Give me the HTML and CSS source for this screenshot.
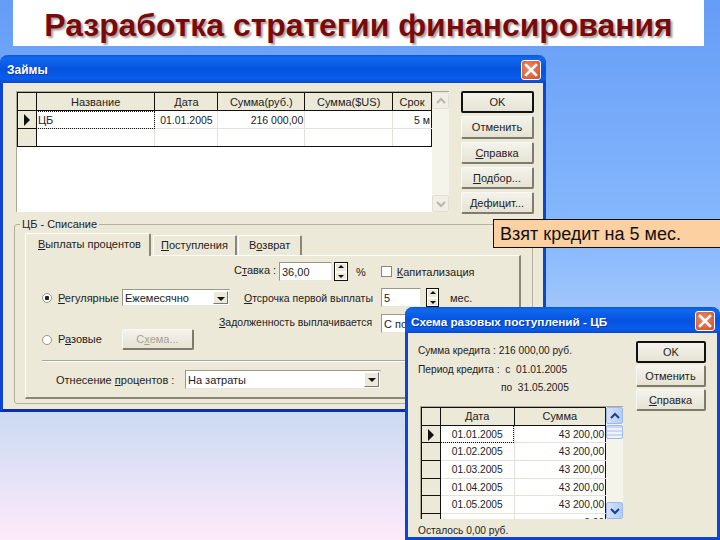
FILE: index.html
```html
<!DOCTYPE html>
<html lang="en">
  <head>
    <meta charset="UTF-8" />
    <title>Разработка стратегии финансирования</title>
    <link rel="stylesheet" href="styles.css">
  </head>
  <body>
    <h1 class="slideTitle">Разработка стратегии финансирования</h1>

    <div class="window loansWin">
      <div class="titleBar">
        <span>Займы</span>
        <span class="closeBtn"><svg viewBox="0 0 20 20" width="20" height="20"><path d="M5 5L15 15M15 5L5 15" stroke="#fff" stroke-width="2.6" stroke-linecap="square"/></svg></span>
      </div>
      <div class="topRow">
        <div class="gridFrame loansGrid">
          <table class="grid">
            <colgroup><col class="c18"><col class="c119"><col class="c63"><col class="c87"><col class="c88"><col class="c38"></colgroup>
            <tr><th></th><th>Название</th><th>Дата</th><th>Сумма(руб.)</th><th>Сумма($US)</th><th>Срок</th></tr>
            <tr><th><span class="rowArrow"></span></th><td class="current">ЦБ</td><td class="mid">01.01.2005</td><td class="num">216 000,00</td><td></td><td class="num">5 м</td></tr>
            <tr><th></th><td></td><td></td><td></td><td></td><td></td></tr>
          </table>
          <div class="scrollbar off">
            <span class="scrollBtn"><svg viewBox="0 0 10 8" width="10" height="8"><path d="M1 6L5 2L9 6" fill="none" stroke="#b9b7ab" stroke-width="2"/></svg></span>
            <span class="scrollBtn"><svg viewBox="0 0 10 8" width="10" height="8"><path d="M1 2L5 6L9 2" fill="none" stroke="#b9b7ab" stroke-width="2"/></svg></span>
          </div>
        </div>
        <div class="btnCol">
          <button class="btn default okBtn">OK</button>
          <button class="btn tall">Отменить</button>
          <button class="btn"><u>С</u>правка</button>
          <button class="btn"><u>П</u>одбор...</button>
          <button class="btn"><u>Д</u>ефицит...</button>
        </div>
      </div>

      <fieldset class="group">
        <legend>ЦБ - Списание</legend>
        <div class="tabs">
          <div class="tab active"><u>В</u>ыплаты процентов</div>
          <div class="tab t2"><u>П</u>оступления</div>
          <div class="tab t3">В<u>о</u>зврат</div>
        </div>
        <div class="tabPanel">
          <div class="row rateRow">
            <span class="lbl rateLbl">С<u>т</u>авка :</span>
            <span class="field rateField">36,00</span>
            <span class="spin"><i class="up"></i><i class="down"></i></span>
            <span class="percent">%</span>
            <span class="check"></span>
            <span class="lbl capLbl"><u>К</u>апитализация</span>
          </div>
          <div class="row regRow">
            <span class="radio on"></span>
            <span class="lbl regLbl"><u>Р</u>егулярные</span>
            <span class="field combo monthCombo">Ежемесячно<b class="comboBtn"></b></span>
            <span class="lbl delayLbl"><u>О</u>тсрочка первой выплаты</span>
            <span class="field delayField">5</span>
            <span class="spin delaySpin"><i class="up"></i><i class="down"></i></span>
            <span class="lbl monLbl">мес.</span>
          </div>
          <div class="row payRow">
            <div class="onceBlock">
              <span class="radio"></span>
              <span class="lbl onceLbl">Р<u>а</u>зовые</span>
              <button class="btn disabled schemeBtn">С<u>х</u>ема...</button>
            </div>
            <span class="lbl debtLbl"><u>З</u>адолженность выплачивается</span>
            <span class="field debtField">С по</span>
          </div>
          <div class="separator"></div>
          <div class="row costRow">
            <span class="lbl costLbl">Отнесение <u>п</u>роцентов :</span>
            <span class="field combo costCombo">На затраты<b class="comboBtn"></b></span>
          </div>
        </div>
      </fieldset>
    </div>

    <div class="hint">Взят кредит на 5 мес.</div>

    <div class="window schemeWin">
      <div class="titleBar small">
        <span>Схема разовых поступлений - ЦБ</span>
        <span class="closeBtn"><svg viewBox="0 0 20 20" width="20" height="20"><path d="M5 5L15 15M15 5L5 15" stroke="#fff" stroke-width="2.6" stroke-linecap="square"/></svg></span>
      </div>
      <div class="schemeBody">
        <div class="schemeLeft">
          <div class="infoLine first">Сумма кредита : 216 000,00 руб.</div>
          <div class="infoLine">Период кредита :&nbsp; с&nbsp; 01.01.2005</div>
          <div class="infoLine indent">по&nbsp; 31.05.2005</div>
          <div class="gridFrame schemeGrid">
            <table class="grid">
              <colgroup><col class="c18"><col class="c74"><col class="c92"></colgroup>
              <tr><th></th><th>Дата</th><th>Сумма</th></tr>
              <tr><th><span class="rowArrow"></span></th><td class="current mid">01.01.2005</td><td class="num">43 200,00</td></tr>
              <tr><th></th><td class="mid">01.02.2005</td><td class="num">43 200,00</td></tr>
              <tr><th></th><td class="mid">01.03.2005</td><td class="num">43 200,00</td></tr>
              <tr><th></th><td class="mid">01.04.2005</td><td class="num">43 200,00</td></tr>
              <tr><th></th><td class="mid">01.05.2005</td><td class="num">43 200,00</td></tr>
              <tr><th></th><td></td><td class="num">0,00</td></tr>
            </table>
            <div class="scrollbar">
              <span class="scrollBtn blue"><svg viewBox="0 0 10 8" width="10" height="8"><path d="M1 6L5 2L9 6" fill="none" stroke="#1d3f8c" stroke-width="2"/></svg></span>
              <span class="thumb"></span>
              <span class="scrollBtn blue bottom"><svg viewBox="0 0 10 8" width="10" height="8"><path d="M1 2L5 6L9 2" fill="none" stroke="#1d3f8c" stroke-width="2"/></svg></span>
            </div>
          </div>
          <div class="leftover">Осталось 0,00 руб.</div>
        </div>
        <div class="btnCol schemeBtns">
          <button class="btn default">OK</button>
          <button class="btn">Отменить</button>
          <button class="btn"><u>С</u>правка</button>
        </div>
      </div>
    </div>
  </body>
</html>
```

FILE: styles.css
```css
* {
  box-sizing: border-box;
}
body {
  margin: 0;
  width: 720px;
  height: 540px;
  overflow: hidden;
  position: relative;
  font-family: "Liberation Sans", Arial, sans-serif;
  font-size: 11px;
  color: #222;
  background: linear-gradient(#659cf6 0, #8abbfe 250px, #cbdaf2 412px, #fdeafa 540px);
}
.slideTitle {
  margin: 0 16px 0 13px;
  height: 46px;
  background: #fff;
  color: #7a0a0a;
  font-size: 31.9px;
  line-height: 50px;
  text-align: center;
  text-shadow: 2px 2px 2px #a9a2a2;
}

/* windows */
.window {
  position: absolute;
  background: #ece9d8;
  border: 3px solid #0c46cf;
  border-top: none;
  border-radius: 8px 8px 0 0;
}
.loansWin {
  left: 0;
  top: 55px;
  width: 546px;
  height: 357px;
  border-bottom-color: #0a2fa8;
}
.schemeWin {
  left: 405px;
  top: 307px;
  width: 315px;
  height: 233px;
}
.titleBar {
  display: flex;
  justify-content: space-between;
  align-items: center;
  height: 28px;
  margin: 0 -3px;
  padding: 2px 5px 0 7px;
  border-radius: 8px 8px 0 0;
  background: linear-gradient(#0a56d8 0, #1068ee 12%, #0553e0 50%, #0a5cec 85%, #0c48c8 100%);
  color: #fff;
  font-weight: bold;
  font-size: 12px;
  text-shadow: 1px 1px 0 #0a3a9c;
}
.titleBar.small {
  height: 26px;
  padding-left: 6px;
  font-size: 11.75px;
}
.closeBtn {
  width: 20px;
  height: 20px;
  border: 1px solid #fff;
  border-radius: 3px;
  background: radial-gradient(circle at 40% 40%, #ec8a68, #d24a22);
  display: flex;
  align-items: center;
  justify-content: center;
}
.closeBtn svg {
  flex: none;
}

/* top part of loans */
.topRow {
  display: flex;
  margin: 8px 0 0 13px;
}
.gridFrame {
  display: flex;
  border-top: 1px solid #aca899;
  border-left: 1px solid #aca899;
  background: #fff;
  overflow: hidden;
}
.loansGrid {
  width: 433px;
  height: 121px;
}
.grid {
  border-collapse: collapse;
  table-layout: fixed;
  align-self: flex-start;
  font-size: 11px;
}
.c18 { width: 19px; }
.c119 { width: 119px; }
.c63 { width: 63px; }
.c87 { width: 87px; }
.c88 { width: 88px; }
.c38 { width: 39px; }
.c74 { width: 74px; }
.c92 { width: 92px; }
.grid th {
  height: 18px;
  padding: 0;
  background: #ece9d8;
  font-weight: normal;
  border: 1px solid #111;
  text-align: center;
}
.grid td {
  height: 18px;
  padding: 0 1px;
  border: 1px solid #e4e2d6;
  white-space: nowrap;
  overflow: hidden;
}
.grid tr:last-child td {
  border-bottom-color: #111;
}
.grid tr:last-child th {
  border-bottom-color: #111;
}
.grid td:last-child {
  border-right-color: #111;
}
.schemeGrid .grid tr:last-child td {
  border-bottom-color: #e4e2d6;
}
.grid .current {
  outline: 1px dotted #111;
  outline-offset: -1px;
}
.grid .mid {
  text-align: center;
  font-size: 10.5px;
}
.grid .num {
  text-align: right;
  font-size: 10.5px;
}
.rowArrow {
  display: inline-block;
  vertical-align: middle;
  border-left: 6px solid #111;
  border-top: 6px solid transparent;
  border-bottom: 6px solid transparent;
}
.scrollbar {
  width: 17px;
  display: flex;
  flex-direction: column;
  justify-content: space-between;
  background: #f5f4ea;
}
.scrollBtn {
  display: flex;
  align-items: center;
  justify-content: center;
  height: 17px;
  background: #f0efe6;
  border: 1px solid #e2e0d4;
  border-radius: 2px;
}
.scrollBtn.blue {
  background: linear-gradient(90deg, #d4e2fb, #b4ccf5);
  border-color: #9db8ea;
}
.scrollBtn.bottom {
  margin-top: auto;
}
.thumb {
  height: 14px;
  margin-top: 1px;
  background: repeating-linear-gradient(#c8d8f5 0 2px, #eef3fd 2px 4px);
  border: 1px solid #9db8ea;
  border-radius: 2px;
}

/* buttons */
.btnCol {
  display: flex;
  flex-direction: column;
  gap: 3px;
  width: 73px;
  margin-left: 12px;
}
.btn {
  height: 22px;
  padding: 0;
  font: inherit;
  color: #222;
  background: linear-gradient(#f4f3ec, #e6e3d3);
  border: 1px solid #f8f7f2;
  border-right: 2px solid #7d7b6c;
  border-bottom: 2px solid #7d7b6c;
  border-radius: 2px;
}
.btn.tall {
  height: 23px;
}
.btn.default {
  border: 2px solid #111;
}
.btn.disabled {
  color: #a5a294;
}

/* group with tabs */
.group {
  margin: 3px 10px 0 11px;
  padding: 2px 11px 4px 10px;
  min-width: 0;
  border: 1px solid #b3b09e;
  border-radius: 3px;
}
.group legend {
  padding: 0 2px;
  margin-left: -5px;
  line-height: 14px;
}
.tabs {
  display: flex;
  align-items: flex-end;
  height: 22px;
}
.tab {
  height: 20px;
  padding: 3px 0 0 10px;
  width: 64px;
  background: #ece9d8;
  border-top: 1px solid #fff;
  border-left: 1px solid #fff;
  border-right: 2px solid #8a8774;
  border-radius: 2px 2px 0 0;
  white-space: nowrap;
}
.tab.active {
  width: 126px;
  height: 23px;
  margin-bottom: -1px;
  position: relative;
  padding: 4px 0 0 12px;
}
.tab.t2 {
  width: 84px;
  margin-left: 2px;
  padding-left: 7px;
}
.tab.t3 {
  margin-left: 1px;
}
.tabPanel {
  height: 144px;
  padding: 6px 0 0 16px;
  border: 1px solid #fff;
  border-right: 2px solid #8a8774;
  border-bottom: 2px solid #8a8774;
}
.row {
  display: flex;
  align-items: center;
}
.lbl {
  white-space: nowrap;
  flex: none;
}
.field {
  flex: none;
  display: flex;
  align-items: center;
  padding-left: 2px;
  background: #fff;
  border: 1px solid #9a9786;
  border-right-color: #e8e6da;
  border-bottom-color: #e8e6da;
  white-space: nowrap;
  overflow: hidden;
}
.combo {
  justify-content: space-between;
  padding-right: 1px;
}
.comboBtn {
  flex: none;
  position: relative;
  width: 15px;
  height: calc(100% - 2px);
  background: #ece9d8;
  border: 1px solid #fff;
  border-right-color: #777;
  border-bottom-color: #777;
}
.comboBtn::after {
  content: "";
  position: absolute;
  left: 3px;
  top: 5px;
  border-top: 4px solid #111;
  border-left: 4px solid transparent;
  border-right: 4px solid transparent;
}
.spin {
  flex: none;
  display: flex;
  flex-direction: column;
  width: 14px;
  height: 19px;
  margin-left: 2px;
  border: 1px solid #111;
}
.spin i {
  flex: 1;
  position: relative;
  background: #ece9d8;
  border: 1px solid #fff;
}
.spin i::after {
  content: "";
  position: absolute;
  left: 2px;
  border-left: 3px solid transparent;
  border-right: 3px solid transparent;
}
.spin .up::after {
  top: 1px;
  border-bottom: 3px solid #111;
}
.spin .down::after {
  top: 2px;
  border-top: 3px solid #111;
}
.radio {
  flex: none;
  width: 10px;
  height: 10px;
  border-radius: 50%;
  background: #fff;
  border: 1px solid #9a9786;
}
.radio.on {
  background: radial-gradient(circle, #222 0 2px, #fff 2.5px);
}
.check {
  flex: none;
  width: 11px;
  height: 11px;
  margin-left: 15px;
  background: #fff;
  border: 1px solid #8a8774;
}
.rateRow {
  margin-left: 192px;
  height: 19px;
}
.rateLbl {
  width: 40px;
  margin-bottom: 3px;
}
.rateField {
  width: 53px;
  height: 19px;
  margin-left: 5px;
}
.percent {
  margin-left: 8px;
}
.capLbl {
  margin-left: 5px;
}
.regRow {
  margin-top: 8px;
  height: 17px;
}
.regLbl {
  margin-left: 6px;
  width: 60px;
}
.monthCombo {
  width: 108px;
  height: 17px;
  margin-left: 4px;
}
.delayLbl {
  width: 130px;
  margin-left: 14px;
  font-size: 10.5px;
}
.delayField {
  width: 40px;
  height: 19px;
  margin-left: 7px;
}
.delaySpin {
  margin-left: 5px;
  width: 13px;
}
.monLbl {
  margin-left: 11px;
}
.payRow {
  margin-top: 8px;
  height: 36px;
  align-items: flex-start;
}
.onceBlock {
  display: flex;
  align-items: center;
  width: 152px;
  margin-top: 15px;
  flex: none;
}
.onceLbl {
  margin: 0 0 2px 6px;
  width: 64px;
}
.schemeBtn {
  width: 72px;
  height: 21px;
  flex: none;
}
.debtLbl {
  width: 155px;
  margin: 2px 0 0 25px;
  font-size: 10.5px;
}
.debtField {
  width: 200px;
  height: 19px;
  margin-left: 7px;
}
.separator {
  margin-top: 10px;
  height: 2px;
  border-top: 1px solid #aca899;
  border-bottom: 1px solid #fff;
}
.costRow {
  margin: 8px 0 0 14px;
}
.costLbl {
  width: 113px;
}
.costCombo {
  width: 196px;
  height: 19px;
  margin-left: 16px;
}

/* hint over the window */
.hint {
  position: absolute;
  left: 493px;
  top: 219px;
  width: 227px;
  height: 29px;
  padding-left: 6px;
  background: #fdd0a2;
  border: 1px solid #111;
  border-right: none;
  color: #111;
  font-size: 18px;
  line-height: 28px;
}

/* one-off scheme */
.schemeBody {
  display: flex;
}
.schemeLeft {
  width: 228px;
  margin-left: 10px;
  padding-top: 9px;
  font-size: 10.2px;
}
.infoLine {
  height: 18px;
  line-height: 18px;
  white-space: nowrap;
}
.infoLine.first {
  height: 19px;
}
.infoLine.indent {
  padding-left: 83px;
}
.schemeGrid {
  width: 203px;
  height: 113px;
  margin: 9px 0 0 2px;
}
.schemeGrid .grid th,
.schemeGrid .grid td {
  height: 17.7px;
}
.schemeGrid .grid .mid,
.schemeGrid .grid .num {
  font-size: 10.2px;
}
.leftover {
  margin-top: 4px;
  line-height: 16px;
  white-space: nowrap;
}
.schemeBtns {
  width: 70px;
  gap: 2px;
  margin-left: -10px;
  margin-top: 8px;
}
```
